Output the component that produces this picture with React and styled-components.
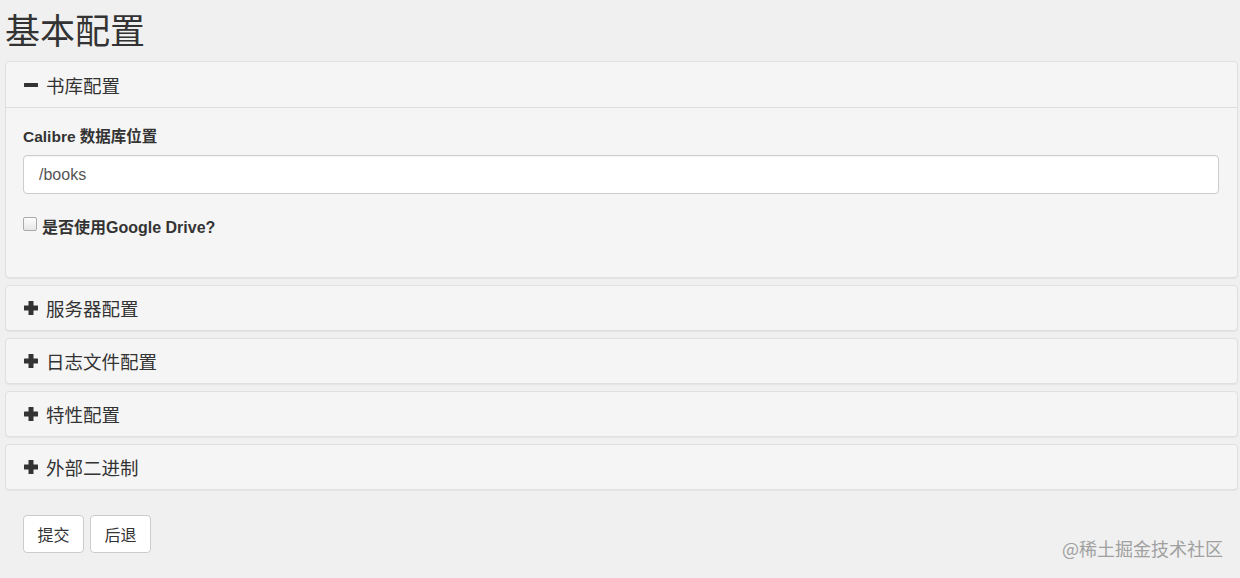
import React from 'react'
import styled, { createGlobalStyle } from 'styled-components'

const Global = createGlobalStyle`
  html, body { margin: 0; padding: 0; background: #f0f0f0; }
  body {
    font-family: "Liberation Sans", "Noto Sans CJK SC", sans-serif;
    color: #333;
    font-size: 14px;
  }
`

const Page = styled.div`
  padding: 6px 2px 0 5px;
  height: 578px;
  box-sizing: border-box;
  position: relative;
`

const Title = styled.h1`
  margin: 0 0 9px 0;
  font-size: 35px;
  font-weight: 400;
  line-height: 46px;
  color: #333;
  font-family: "Noto Sans CJK SC", sans-serif;
`

const Panel = styled.div`
  background: #f5f5f5;
  border: 1px solid #e0e0e0;
  border-radius: 4px;
  box-shadow: 0 1px 1px rgba(0, 0, 0, 0.05);
  margin-bottom: 7px;
`

const PanelHead = styled.div`
  height: ${({ open }) => (open ? '45px' : '44px')};
  display: flex;
  align-items: center;
  gap: 7px;
  padding: 0 17px;
  font-size: 18.5px;
  color: #333;
  font-family: "Noto Sans CJK SC", sans-serif;
  border-bottom: ${({ open }) => (open ? '1px solid #ddd' : 'none')};
`

const PanelBody = styled.div`
  padding: 19px 18px 0 17px;
  height: 150px;
`

const Label = styled.label`
  display: block;
  font-weight: 700;
  font-size: 15.5px;
  line-height: 20px;
  margin-bottom: 8px;
`

const Input = styled.input`
  display: block;
  width: 100%;
  box-sizing: border-box;
  height: 39px;
  padding: 6px 15px;
  border: 1px solid #ccc;
  border-radius: 4px;
  background: #fff;
  font-size: 16px;
  font-family: "Liberation Sans", sans-serif;
  color: #555;
  box-shadow: inset 0 1px 1px rgba(0, 0, 0, 0.05);
`

const CheckRow = styled.div`
  display: flex;
  align-items: center;
  gap: 5px;
  margin-top: 20px;
  font-weight: 700;
  font-size: 16px;
`

const Box = styled.span`
  width: 12px;
  height: 12px;
  border: 1px solid #aaa;
  border-radius: 2px;
  background: linear-gradient(#fdfdfd, #e6e6e6);
  margin-top: -4px;
`

const Buttons = styled.div`
  display: flex;
  gap: 6px;
  padding: 18px 0 0 18px;
`

const Button = styled.button`
  width: 61px;
  height: 38px;
  background: #fff;
  border: 1px solid #ccc;
  border-radius: 4px;
  font-size: 16px;
  color: #333;
  font-family: "Noto Sans CJK SC", sans-serif;
`

const Watermark = styled.div`
  position: absolute;
  right: 17px;
  bottom: 17px;
  font-size: 18px;
  color: #a0a0a0;
  font-family: "Noto Sans CJK SC", sans-serif;
`

const Minus = () => (
  <svg width="16" height="16" viewBox="0 0 16 16">
    <rect x="1" y="6" width="14" height="4" rx="0.5" fill="#333" />
  </svg>
)

const Plus = () => (
  <svg width="16" height="16" viewBox="0 0 16 16">
    <rect x="1" y="5.5" width="14" height="5" rx="0.5" fill="#333" />
    <rect x="5.5" y="1" width="5" height="14" rx="0.5" fill="#333" />
  </svg>
)

const closed = ['服务器配置', '日志文件配置', '特性配置', '外部二进制']

export default function App() {
  return (
    <Page>
      <Global />
      <Title>基本配置</Title>
      <Panel>
        <PanelHead open>
          <Minus />
          书库配置
        </PanelHead>
        <PanelBody>
          <Label>Calibre 数据库位置</Label>
          <Input defaultValue="/books" />
          <CheckRow>
            <Box />
            是否使用Google Drive?
          </CheckRow>
        </PanelBody>
      </Panel>
      {closed.map((t) => (
        <Panel key={t}>
          <PanelHead>
            <Plus />
            {t}
          </PanelHead>
        </Panel>
      ))}
      <Buttons>
        <Button>提交</Button>
        <Button>后退</Button>
      </Buttons>
      <Watermark>@稀土掘金技术社区</Watermark>
    </Page>
  )
}
